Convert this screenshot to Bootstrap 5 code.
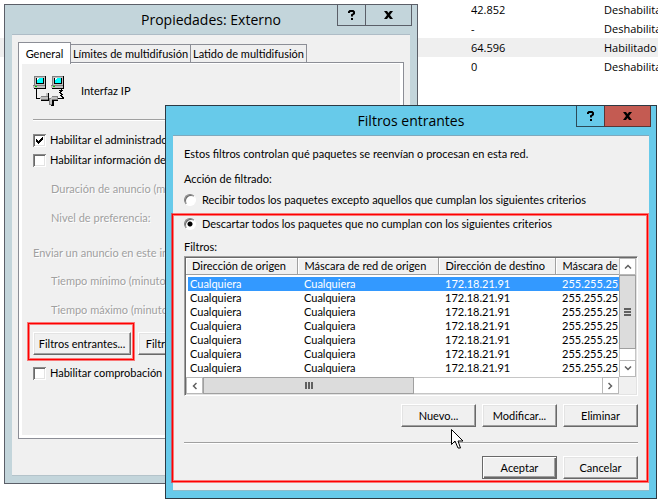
<!DOCTYPE html>
<html lang="es">
<head>
<meta charset="utf-8">
<meta name="viewport" content="width=device-width, initial-scale=1">
<title>Filtros entrantes</title>
<link rel="stylesheet" href="https://cdn.jsdelivr.net/npm/bootstrap@5.3.0/dist/css/bootstrap.min.css">
<style>
  body { font: 11px/14px Lato, "Liberation Sans", Arial, sans-serif; color: #000; background: #fff; min-height: 100vh; overflow: hidden; }
  .desk { min-height: 100vh; }

  /* Interface list behind the dialogs */
  .iface { font: 11px/19px "Open Sans", "Noto Sans", sans-serif; table-layout: fixed; white-space: nowrap; }
  .iface td { padding: 0; height: 19px; overflow: hidden; }
  .iface .c-bytes { width: 133px; }
  .iface .c-state { width: 54px; }
  .iface .picked { background: #efefef; }

  /* Window frames */
  .win { border: 1px solid #5b5f68; background: #c3d5db; padding: 0 7px 7px; }
  .win-back { left: 4px; right: 240px; top: 4px; }
  .win-front { left: 165px; right: 1px; top: 105px; background: #67caea; border-color: #2c3a44; }
  .win-title { height: 29px; font: 14px/20px "Open Sans", "Noto Sans", sans-serif; padding-top: 5px; margin: 0; text-align: center; }
  .win-body { background: #f0f0f0; border-top: 1px solid #aebcc6; border-bottom: 1px solid #b4c3ca; white-space: nowrap; }
  .win-front .win-body { border-top-color: #7fa9bd; border-bottom-color: #8fbccb; }
  .win-ctl { top: 0; right: 5px; }
  .win-ctl button { height: 21px; border: 1px solid #5b5f68; border-top: 0; background: none; padding: 0; display: flex; align-items: center; justify-content: center; }
  .win-front .win-ctl button { border-color: #2c4a58; }
  .win-ctl .b-help { width: 28px; border-right: 0; }
  .win-ctl .b-close { width: 47px; }
  .win-front .win-ctl .b-close { background: #c45b52; border-color: #5a3535; }

  /* Tabs */
  .tabs { padding: 7px 0 0 6px; height: 27px; }
  .tabs button { border: 1px solid #8c8e96; border-bottom: 0; background: #efefef; color: #000; height: 18px; padding: 0; margin: 2px 0 0 -1px; line-height: 18px; }
  .tabs .on { background: #fff; height: 22px; width: 53px; margin: 0; z-index: 1; line-height: 19px; }
  .tabs .t2 { width: 121px; }
  .tabs .t3 { width: 117px; }
  .pane { margin: 0 6px 36px; border: 1px solid #8c8e96; background: #fff; padding: 1px 3px 3px; }
  .pane-in { background: #f0f0f0; padding: 11px 11px 52px; overflow: hidden; }
  .intro { padding: 8px 11px 0; }

  /* Shared vertical gaps */
  .g1 { margin-top: 1px; }
  .g3 { margin-top: 3px; }
  .g5 { margin-top: 5px; }
  .g9 { margin-top: 9px; }
  .g12 { margin-top: 12px; }
  .g15 { margin-top: 15px; }
  .btns { gap: 6px; }

  .groove { height: 2px; border-top: 1px solid #a0a0a0; border-bottom: 1px solid #fff; }
  .ln { height: 20px; display: flex; align-items: center; }
  .ln-s { height: 18px; }
  .dim { color: #a0a0a0; text-shadow: 1px 1px 0 #fff; }
  .ind { padding-left: 18px; }

  /* Tick boxes and radios */
  .form-check-input.tk { width: 13px; height: 13px; margin: 0 4px 0 0; float: none; flex: none; background-color: #fff; background-size: 100% 100%; border: 0; border-radius: 0; box-shadow: inset 1px 1px #8a8a8a, inset -1px -1px #fff, inset 2px 2px #696969, inset -2px -2px #e3e3e3; }
  .form-check-input.tk:checked { background-color: #fff; background-image: url("data:image/svg+xml,%3Csvg xmlns='http://www.w3.org/2000/svg' viewBox='0 0 13 13' shape-rendering='crispEdges'%3E%3Cpath d='M3 5h1v1h1v1h1v-1h1v-1h1v-1h1v-1h1v3h-1v1h-1v1h-1v1h-1v1h-1v-1h-1v-1h-1z'/%3E%3C/svg%3E"); }
  .form-check-input.rd { width: 12px; height: 12px; margin: 0 6px 0 0; float: none; flex: none; background-color: #fff; border: 1px solid; border-color: #808080 #fff #fff #808080; border-radius: 50%; box-shadow: inset 1px 1px #696969; }
  .form-check-input.rd:checked { background-color: #fff; border-color: #808080 #fff #fff #808080; background-image: radial-gradient(circle at 50% 50%, #000 2px, transparent 3px); }

  /* Raised push buttons */
  .btn.pb { height: 23px; width: 75px; padding: 0; font-size: 11px; line-height: 19px; color: #000; background: #f0f0f0; border-radius: 0; border: 1px solid; border-color: #fff #696969 #696969 #fff; box-shadow: inset -1px -1px #a0a0a0, inset 1px 1px #e3e3e3; flex: none; }
  .btn.pb.wide { width: 98px; }
  .btn.pb.main { border-color: #696969; box-shadow: inset 1px 1px #fff, inset -1px -1px #696969, inset -2px -2px #a0a0a0; }
  .mark-red { border: 1px solid #f00; box-shadow: 0 0 0 1px rgba(255,0,0,.5), inset 0 0 0 1px rgba(255,0,0,.5); }
  .mark-btn { padding: 8px 2px 4px 4px; margin-left: -5px; }
  .mark-box { margin: 4px 1px 0 -1px; padding: 0 9px 2px 11px; }

  /* Filter list */
  .lst { border: 1px solid; border-color: #a0a0a0 #fff #fff #a0a0a0; box-shadow: inset 1px 1px #696969, inset -1px -1px #e3e3e3; padding: 1px; background: #fff; }
  .lst-view { min-width: 0; overflow: hidden; padding-bottom: 2px; }
  .flt { table-layout: fixed; width: 100%; line-height: 14px; }
  .c-src { width: 111px; }
  .c-mask { width: 141px; }
  .c-dst { width: 117px; }
  .flt th, .flt td { padding: 0; overflow: hidden; font-weight: 400; white-space: nowrap; }
  .flt th { height: 16px; background: #f0f0f0; padding-left: 7px; border-right: 1px solid #a0a0a0; border-bottom: 1px solid #a0a0a0; box-shadow: inset 1px 1px #fff; }
  .flt th:last-child { border-right: 0; }
  .flt th:first-child { padding-left: 6px; }
  .flt td { height: 14px; padding-left: 7px; }
  .flt td:first-child { padding-left: 4px; }
  .flt .hit td { background: #3399ff; color: #fff; }
  .flt .hit td:first-child { box-shadow: inset 2px 0 #fff; }
  .flt .gap td { height: 3px; }
  .sb-btn { width: 17px; height: 17px; flex: none; padding: 0; border: 1px solid #b8b8b8; background: #fff; display: flex; align-items: center; justify-content: center; }
  .sb-v { width: 17px; flex: none; }
  .sb-corner { background: #f0f0f0; }
  .sb-thumb { background: #dcdcdc; border: 1px solid #a0a0a0; display: flex; align-items: center; justify-content: center; }
  .sb-v .sb-thumb { height: 74px; }
  .sb-v .sb-track { border: solid #c6c6c6; border-width: 0 1px; }
  .sb-h .sb-thumb { flex: 0 0 211px; }
  .sb-h .sb-track { border: solid #c6c6c6; border-width: 1px 0; }
  .pointer { left: 451px; top: 428px; z-index: 5; pointer-events: none; }
</style>
</head>
<body>
<main class="desk position-relative">
  <table class="iface w-100">
    <colgroup><col><col class="c-bytes"><col class="c-state"></colgroup>
    <tbody>
      <tr><td></td><td>42.852</td><td>Deshabilitado</td></tr>
      <tr><td></td><td>-</td><td>Deshabilitado</td></tr>
      <tr class="picked"><td></td><td>64.596</td><td>Habilitado</td></tr>
      <tr><td></td><td>0</td><td>Deshabilitado</td></tr>
    </tbody>
  </table>

  <section class="win win-back position-absolute">
    <h1 class="win-title">Propiedades: Externo</h1>
    <div class="win-ctl position-absolute d-flex">
      <button type="button" class="b-help" aria-label="Ayuda"><svg width="8" height="10" viewBox="0 0 8 10"><path d="M1 3V2l1-1h3l1 1v1.500L4 5v1.500" fill="none" stroke="#000" stroke-width="2"/><path d="M3 8h2v2H3z"/></svg></button>
      <button type="button" class="b-close" aria-label="Cerrar"><svg width="9" height="8" viewBox="0 0 9 8"><path d="M0 0h3l1.500 2L6 0h3L6 4l3 4H6L4.500 6 3 8H0l3-4z"/></svg></button>
    </div>
    <div class="win-body">
      <div class="tabs d-flex align-items-start" role="tablist">
        <button type="button" role="tab" class="on position-relative" aria-selected="true">General</button>
        <button type="button" role="tab" class="t2">Límites de multidifusión</button>
        <button type="button" role="tab" class="t3">Latido de multidifusión</button>
      </div>
      <div class="pane">
        <div class="pane-in">
          <div class="d-flex align-items-center">
            <svg width="32" height="32" viewBox="0 0 32 32" shape-rendering="crispEdges" aria-hidden="true">
              <g id="pc"><path fill="#c0c0c0" d="M1 1h11v9H1z"/><path fill="#808080" d="M1 1h11v1H2v8H1z"/><path fill="#000" d="M12 1h1v9h-1zM3 3h8v6H3z"/><path fill="#0ff" d="M4 3h6v5H4z"/><path fill="#fff" d="M4 3h2v1H5v1H4z"/><path fill="#808080" d="M0 10h13v1H0z"/><path fill="#c0c0c0" d="M0 11h12v2H0z"/><path fill="#0c0" d="M2 11h2v1H2z"/><path d="M12 10h1v4H1v-1h11z"/></g>
              <use href="#pc" x="18"/>
              <path d="M3 14h1v9h3v1H3zM28 14h1v1h1v1h-1v1h-1v1h1v1h1v1h-1v1h1v1h1v2h-6v-1h4v-1h-1v-1h-1v-1h1v-1h-1v-1h-1v-1h1v-1h-1v-1h1z"/>
              <path fill="#808080" d="M13 18h3v3h-3zM8 21h8v4H8zM19 21h6v4h-6zM16 23h3v7h-3z"/>
              <path fill="#c0c0c0" d="M13 18h2v3h-2zM7 22h8v2H7zM18 22h6v2h-6zM17 24h2v5h-2z"/>
              <path d="M15 18h1v8h-1zM8 25h7v1H8zM20 25h5v1h-5zM19 25h2v6h-3v-1h1z"/>
            </svg>
            <span class="ms-3">Interfaz IP</span>
          </div>
          <div class="groove g12"></div>
          <label class="ln g9"><input class="form-check-input tk" type="checkbox" checked>Habilitar el administrador</label>
          <label class="ln"><input class="form-check-input tk" type="checkbox">Habilitar información de enrutador</label>
          <div class="ln dim ind g9">Duración de anuncio (minutos):</div>
          <div class="ln dim ind g9">Nivel de preferencia:</div>
          <div class="ln dim g15">Enviar un anuncio en este intervalo:</div>
          <div class="ln dim ind mt-2">Tiempo mínimo (minutos):</div>
          <div class="ln dim ind g9">Tiempo máximo (minutos):</div>
          <div class="d-flex g3">
            <div class="mark-red mark-btn"><button type="button" class="btn pb wide">Filtros entrantes...</button></div>
            <button type="button" class="btn pb wide ms-1 g9">Filtros salientes...</button>
          </div>
          <label class="ln g3"><input class="form-check-input tk" type="checkbox">Habilitar comprobación de fragmentación</label>
        </div>
      </div>
    </div>
  </section>

  <section class="win win-front position-absolute">
    <h2 class="win-title">Filtros entrantes</h2>
    <div class="win-ctl position-absolute d-flex">
      <button type="button" class="b-help" aria-label="Ayuda"><svg width="8" height="10" viewBox="0 0 8 10"><path d="M1 3V2l1-1h3l1 1v1.500L4 5v1.500" fill="none" stroke="#000" stroke-width="2"/><path d="M3 8h2v2H3z"/></svg></button>
      <button type="button" class="b-close" aria-label="Cerrar"><svg width="9" height="8" viewBox="0 0 9 8"><path d="M0 0h3l1.500 2L6 0h3L6 4l3 4H6L4.500 6 3 8H0l3-4z"/></svg></button>
    </div>
    <div class="win-body pb-2">
      <div class="intro">
        <div class="ln">Estos filtros controlan qué paquetes se reenvían o procesan en esta red.</div>
        <div class="ln g5">Acción de filtrado:</div>
        <label class="ln g1"><input class="form-check-input rd" type="radio" name="accion">Recibir todos los paquetes excepto aquellos que cumplan los siguientes criterios</label>
      </div>
      <div class="mark-red mark-box">
        <label class="ln ln-s"><input class="form-check-input rd" type="radio" name="accion" checked>Descartar todos los paquetes que no cumplan con los siguientes criterios</label>
        <div class="ln ln-s g5">Filtros:</div>
        <div class="lst">
          <div class="d-flex">
            <div class="lst-view flex-fill">
              <table class="flt">
                <colgroup><col class="c-src"><col class="c-mask"><col class="c-dst"><col></colgroup>
                <thead><tr><th>Dirección de origen</th><th>Máscara de red de origen</th><th>Dirección de destino</th><th>Máscara de destino</th></tr></thead>
                <tbody>
                  <tr class="gap"><td colspan="4"></td></tr>
                  <tr class="hit"><td>Cualquiera</td><td>Cualquiera</td><td>172.18.21.91</td><td>255.255.255.255</td></tr>
                  <tr><td>Cualquiera</td><td>Cualquiera</td><td>172.18.21.91</td><td>255.255.255.255</td></tr>
                  <tr><td>Cualquiera</td><td>Cualquiera</td><td>172.18.21.91</td><td>255.255.255.255</td></tr>
                  <tr><td>Cualquiera</td><td>Cualquiera</td><td>172.18.21.91</td><td>255.255.255.255</td></tr>
                  <tr><td>Cualquiera</td><td>Cualquiera</td><td>172.18.21.91</td><td>255.255.255.255</td></tr>
                  <tr><td>Cualquiera</td><td>Cualquiera</td><td>172.18.21.91</td><td>255.255.255.255</td></tr>
                  <tr><td>Cualquiera</td><td>Cualquiera</td><td>172.18.21.91</td><td>255.255.255.255</td></tr>
                </tbody>
              </table>
            </div>
            <div class="sb-v d-flex flex-column">
              <button type="button" class="sb-btn" aria-label="Subir"><svg width="8" height="5" viewBox="0 0 8 5"><path d="M1 4.500 4 1.500l3 3" fill="none" stroke="#606060" stroke-width="1.500"/></svg></button>
              <div class="sb-thumb"><svg width="7" height="8" viewBox="0 0 7 8"><path fill="#606060" d="M0 0h7v2H0zM0 3h7v2H0zM0 6h7v2H0z"/></svg></div>
              <div class="sb-track flex-fill"></div>
              <button type="button" class="sb-btn" aria-label="Bajar"><svg width="8" height="5" viewBox="0 0 8 5"><path d="M1 .5l3 3 3-3" fill="none" stroke="#606060" stroke-width="1.500"/></svg></button>
            </div>
          </div>
          <div class="d-flex sb-h">
            <button type="button" class="sb-btn" aria-label="Izquierda"><svg width="5" height="8" viewBox="0 0 5 8"><path d="M4.500 1l-3 3 3 3" fill="none" stroke="#606060" stroke-width="1.500"/></svg></button>
            <div class="sb-thumb"><svg width="8" height="7" viewBox="0 0 8 7"><path fill="#606060" d="M0 0h2v7H0zM3 0h2v7H3zM6 0h2v7H6z"/></svg></div>
            <div class="sb-track flex-fill"></div>
            <button type="button" class="sb-btn" aria-label="Derecha"><svg width="5" height="8" viewBox="0 0 5 8"><path d="M.5 1l3 3-3 3" fill="none" stroke="#606060" stroke-width="1.500"/></svg></button>
            <div class="sb-v sb-corner"></div>
          </div>
        </div>
        <div class="d-flex justify-content-end btns mt-2">
          <button type="button" class="btn pb">Nuevo...</button>
          <button type="button" class="btn pb">Modificar...</button>
          <button type="button" class="btn pb">Eliminar</button>
        </div>
        <div class="groove g15"></div>
        <div class="d-flex justify-content-end btns g12">
          <button type="button" class="btn pb main">Aceptar</button>
          <button type="button" class="btn pb">Cancelar</button>
        </div>
      </div>
    </div>
  </section>

  <svg class="pointer position-absolute" width="13" height="22" viewBox="0 0 13 22" aria-hidden="true"><path d="M.5 1.500v15l3.500-3.500 3 7h2.500l-2.500-7h5z" fill="#fff" stroke="#000"/></svg>
</main>
<script src="https://cdn.jsdelivr.net/npm/bootstrap@5.3.0/dist/js/bootstrap.bundle.min.js"></script>
</body>
</html>
